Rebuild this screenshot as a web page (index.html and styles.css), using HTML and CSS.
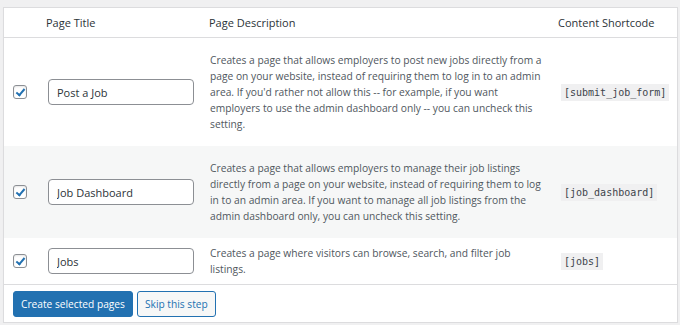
FILE: index.html
```html
<!DOCTYPE html>
<html lang="en">
<head>
  <meta charset="UTF-8" />
  <title>Page Setup</title>
  <link rel="stylesheet" href="styles.css">
</head>
<body>
  <div class="card">
    <table class="pages">
      <thead>
        <tr>
          <th class="col-check"></th>
          <th class="col-title">Page Title</th>
          <th class="col-desc">Page Description</th>
          <th class="col-code">Content Shortcode</th>
        </tr>
      </thead>
      <tbody>
        <tr>
          <td class="col-check"><input type="checkbox" checked /></td>
          <td class="col-title"><input type="text" value="Post a Job" /></td>
          <td class="col-desc">Creates a page that allows employers to post new jobs directly from a<br>page on your website, instead of requiring them to log in to an admin<br>area. If you'd rather not allow this -- for example, if you want<br>employers to use the admin dashboard only -- you can uncheck this<br>setting.</td>
          <td class="col-code"><code>[submit_job_form]</code></td>
        </tr>
        <tr class="alt">
          <td class="col-check"><input type="checkbox" checked /></td>
          <td class="col-title"><input type="text" value="Job Dashboard" /></td>
          <td class="col-desc">Creates a page that allows employers to manage their job listings<br>directly from a page on your website, instead of requiring them to log<br>in to an admin area. If you want to manage all job listings from the<br>admin dashboard only, you can uncheck this setting.</td>
          <td class="col-code"><code>[job_dashboard]</code></td>
        </tr>
        <tr class="short">
          <td class="col-check"><input type="checkbox" checked /></td>
          <td class="col-title"><input type="text" value="Jobs" /></td>
          <td class="col-desc">Creates a page where visitors can browse, search, and filter job<br>listings.</td>
          <td class="col-code"><code>[jobs]</code></td>
        </tr>
      </tbody>
    </table>
    <div class="actions">
      <button class="btn primary">Create selected pages</button>
      <button class="btn secondary">Skip this step</button>
    </div>
  </div>
</body>
</html>
```

FILE: styles.css
```css
body {
  margin: 0;
  padding: 7px 2px 0 3px;
  background: #f0f0f1;
  font-family: "Open Sans", "Noto Sans", sans-serif;
  color: #1d2327;
}

.card {
  background: #fff;
  border: 1px solid #dcdcde;
  box-shadow: 0 1px 1px rgba(0, 0, 0, 0.04);
}

.pages {
  width: 100%;
  border-collapse: collapse;
  table-layout: fixed;
}

.pages th {
  font-weight: normal;
  font-size: 11px;
  text-align: left;
  height: 29px;
  padding: 0;
  border-bottom: 1px solid #dcdcde;
  color: #2c3338;
}

.pages td {
  padding-top: 14px;
  padding-bottom: 14px;
  padding-right: 0;
  vertical-align: middle;
  font-size: 10.25px;
  line-height: 16px;
  color: #50575e;
}

.pages tr.alt td {
  background: #f6f7f7;
}

.pages tr.short td {
  padding-top: 7px;
  padding-bottom: 7px;
}

.pages .col-check {
  width: 42px;
  padding-left: 9px;
  box-sizing: border-box;
}

.col-title {
  width: 163px;
}

.col-desc {
  width: 349px;
}

.pages td.col-desc {
  padding-right: 4px;
}

input[type="checkbox"] {
  appearance: none;
  display: block;
  margin: 0;
  width: 14px;
  height: 14px;
  border: 1px solid #8c8f94;
  border-radius: 3px;
  background: #fff;
  position: relative;
  box-shadow: inset 0 1px 2px rgba(0, 0, 0, 0.1);
}

input[type="checkbox"]:checked::after {
  content: "";
  position: absolute;
  left: 4px;
  top: 1px;
  width: 3px;
  height: 7px;
  border: solid #2271b1;
  border-width: 0 2px 2px 0;
  transform: rotate(40deg);
}

input[type="text"] {
  display: block;
  box-sizing: border-box;
  width: 146px;
  height: 26px;
  margin-left: 1px;
  padding: 0 8px;
  border: 1px solid #8c8f94;
  border-radius: 4px;
  font-family: inherit;
  font-size: 11px;
  color: #2c3338;
}

code {
  font-family: "DejaVu Sans Mono", "Liberation Mono", monospace;
  font-size: 10px;
  background: #f0f0f1;
  color: #3c434a;
  padding: 3px 3px;
  margin-left: 2px;
}

.actions {
  border-top: 1px solid #dcdcde;
  padding: 6px 9px 5px;
  display: flex;
  gap: 4px;
}

.btn {
  font-family: inherit;
  font-size: 10.2px;
  height: 26px;
  padding: 0 7px;
  border-radius: 3px;
  cursor: pointer;
}

.primary {
  background: #2271b1;
  border: 1px solid #2271b1;
  color: #fff;
}

.secondary {
  background: #f6f7f7;
  border: 1px solid #2271b1;
  color: #2271b1;
}
```
